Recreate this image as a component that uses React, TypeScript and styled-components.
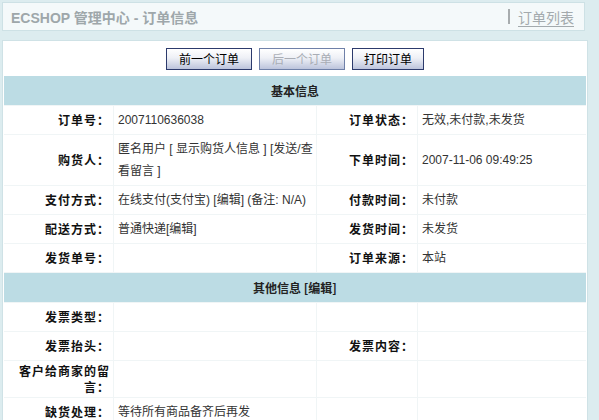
import React from 'react';
import styled, { createGlobalStyle } from 'styled-components';

const GlobalStyle = createGlobalStyle`
    html, body {
        margin: 0;
        padding: 0;
        background: #dcecef;
    }
    body {
        font-family: "Liberation Sans", "Noto Sans CJK SC", sans-serif;
        font-size: 12px;
        color: #222;
    }
`;

const Page = styled.div`
    width: 588px;
    padding: 2px 0 0 2px;
    display: flex;
    flex-direction: column;
    gap: 9px;
`;

const TitleBar = styled.div`
    width: 583px;
    height: 29px;
    border: 1px solid #cde1e5;
    background: #f4f9fa;
    display: flex;
    align-items: center;
    justify-content: space-between;
    padding: 0 10px 0 8px;
    box-sizing: border-box;
`;

const Title = styled.h1`
    margin: 0;
    font-size: 14px;
    font-weight: bold;
    color: #9ea7aa;
    font-family: "Liberation Sans", "Noto Sans CJK SC", sans-serif;
`;

const ActionLink = styled.span`
    display: flex;
    align-items: center;
    gap: 8px;
    font-size: 14px;
    color: #a3aaad;
`;

const Divider = styled.span`
    width: 2px;
    height: 15px;
    background: #a7acae;
`;

const LinkText = styled.a`
    color: #a3aaad;
    text-decoration: underline;
    text-underline-offset: 3px;
`;

const Panel = styled.div`
    width: 586px;
    border: 1px solid #cfe2e6;
    border-bottom: none;
    background: #fff;
    box-sizing: border-box;
    padding: 0 1px;
`;

const ButtonRow = styled.div`
    display: flex;
    justify-content: center;
    gap: 7px;
    padding: 7px 0 6px 0;
`;

const Button = styled.button<{ $wide?: boolean }>`
    height: 22px;
    padding: 0 ${p => (p.$wide ? 12 : 11)}px;
    font-family: "Noto Sans CJK SC", sans-serif;
    font-size: 12px;
    line-height: 18px;
    color: ${p => (p.disabled ? '#a9adb5' : '#000')};
    border: 1px solid ${p => (p.disabled ? '#6f80a8' : '#2c3a6c')};
    background: linear-gradient(#ffffff 0%, #eef0f6 45%, #bcc4dc 100%);
    cursor: pointer;
`;

const Grid = styled.div`
    display: grid;
    grid-template-columns: 109px 202px 100px 1fr;
    gap: 1px;
    background: #f0f5f6;
`;

const SectionHead = styled.div`
    grid-column: 1 / -1;
    background: #bcdce4;
    text-align: center;
    font-family: "Noto Sans CJK SC", sans-serif;
    font-weight: bold;
    font-size: 12px;
    line-height: 20px;
    padding: 5px 0 4px;
`;

const Label = styled.div`
    background: #fff;
    display: flex;
    align-items: center;
    justify-content: flex-end;
    text-align: right;
    padding: 2px 3px 2px 4px;
    font-family: "Noto Sans CJK SC", sans-serif;
    font-weight: bold;
    font-size: 12px;
    letter-spacing: 1px;
    line-height: 16px;
    color: #111;
    min-height: 24px;
`;

const Value = styled.div`
    background: #fff;
    display: flex;
    align-items: center;
    padding: 3px 2px 3px 4px;
    line-height: 22px;
    color: #333;
    word-break: break-all;
`;

type Cell = { label: string; value?: React.ReactNode };

const basicRows: [Cell, Cell][] = [
    [
        { label: '订单号：', value: '2007110636038' },
        { label: '订单状态：', value: '无效,未付款,未发货' },
    ],
    [
        { label: '购货人：', value: '匿名用户 [ 显示购货人信息 ] [发送/查看留言 ]' },
        { label: '下单时间：', value: '2007-11-06 09:49:25' },
    ],
    [
        { label: '支付方式：', value: '在线支付(支付宝) [编辑] (备注: N/A)' },
        { label: '付款时间：', value: '未付款' },
    ],
    [
        { label: '配送方式：', value: '普通快递[编辑]' },
        { label: '发货时间：', value: '未发货' },
    ],
    [
        { label: '发货单号：' },
        { label: '订单来源：', value: '本站' },
    ],
];

const otherRows: [Cell, Cell | null][] = [
    [{ label: '发票类型：' }, null],
    [{ label: '发票抬头：' }, { label: '发票内容：' }],
    [{ label: '客户给商家的留言：' }, null],
    [{ label: '缺货处理：', value: '等待所有商品备齐后再发' }, null],
];

const renderRow = ([left, right]: [Cell, Cell | null], i: number) => (
    <React.Fragment key={i}>
        <Label>{left.label}</Label>
        <Value>{left.value}</Value>
        <Label>{right ? right.label : ''}</Label>
        <Value>{right ? right.value : ''}</Value>
    </React.Fragment>
);

export default function App() {
    return (
        <Page>
            <GlobalStyle />
            <TitleBar>
                <Title>ECSHOP 管理中心 - 订单信息</Title>
                <ActionLink>
                    <Divider />
                    <LinkText>订单列表</LinkText>
                </ActionLink>
            </TitleBar>
            <Panel>
                <ButtonRow>
                    <Button $wide>前一个订单</Button>
                    <Button disabled $wide>后一个订单</Button>
                    <Button>打印订单</Button>
                </ButtonRow>
                <Grid>
                    <SectionHead>基本信息</SectionHead>
                    {basicRows.map(renderRow)}
                    <SectionHead>其他信息 [编辑]</SectionHead>
                    {otherRows.map(renderRow)}
                </Grid>
            </Panel>
        </Page>
    );
}
